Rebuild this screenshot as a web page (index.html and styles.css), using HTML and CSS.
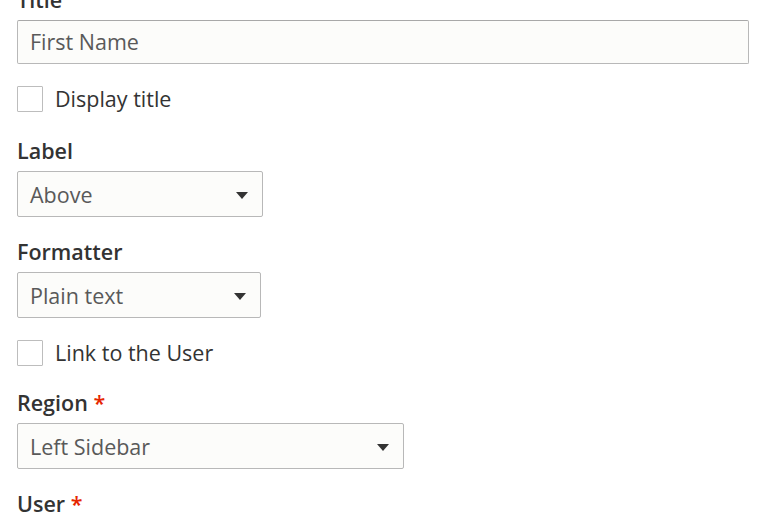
FILE: index.html
```html
<!DOCTYPE html>
<html>
<head>
<meta charset="utf-8">
<link rel="stylesheet" href="styles.css">
</head>
<body>
<form class="form">
  <div class="item">
    <label class="lbl">Title</label>
    <div class="text-input">First Name</div>
  </div>
  <div class="item check-item first-check">
    <span class="box"></span>
    <span class="check-text">Display title</span>
  </div>
  <div class="item">
    <label class="lbl">Label</label>
    <div class="select w-label"><span>Above</span><span class="arrow"></span></div>
  </div>
  <div class="item">
    <label class="lbl">Formatter</label>
    <div class="select w-format"><span>Plain text</span><span class="arrow"></span></div>
  </div>
  <div class="item check-item">
    <span class="box"></span>
    <span class="check-text">Link to the User</span>
  </div>
  <div class="item">
    <label class="lbl">Region <span class="req">*</span></label>
    <div class="select w-region"><span>Left Sidebar</span><span class="arrow"></span></div>
  </div>
  <div class="item">
    <label class="lbl">User <span class="req">*</span></label>
  </div>
</form>
</body>
</html>
```

FILE: styles.css
```css
html, body {
  margin: 0;
  padding: 0;
  background: #ffffff;
}
body {
  font-family: "Open Sans", "Noto Sans", sans-serif;
  font-size: 21.5px;
  color: #333333;
  width: 768px;
  height: 512px;
  overflow: hidden;
}
.form {
  display: flex;
  flex-direction: column;
  padding-left: 17px;
  margin-top: -13px;
}
.item {
  display: flex;
  flex-direction: column;
  align-items: flex-start;
  margin-bottom: 22px;
}
.lbl {
  display: block;
  font-weight: 600;
  line-height: 26px;
  height: 26px;
  margin-bottom: 7px;
  color: #333333;
}
.req {
  color: #e62600;
}
.text-input {
  box-sizing: border-box;
  width: 732px;
  height: 44px;
  border: 1px solid #b8b8b8;
  border-top-color: #a8a8a8;
  border-radius: 2px;
  background: #fcfcfa;
  color: #595959;
  padding: 0 12px;
  line-height: 42px;
}
.check-item {
  flex-direction: row;
  align-items: center;
  gap: 12px;
  margin-bottom: 24px;
}
.first-check {
  margin-bottom: 26px;
}
.box {
  box-sizing: border-box;
  width: 26px;
  height: 26px;
  border: 1px solid #bdbdbd;
  border-radius: 1px;
  background: #fff;
}
.check-text {
  line-height: 26px;
}
.select {
  box-sizing: border-box;
  height: 46px;
  border: 1px solid #b8b8b8;
  border-radius: 2px;
  background: #fcfcfa;
  color: #595959;
  padding: 0 14px 0 12px;
  display: flex;
  align-items: center;
  justify-content: space-between;
}
.w-label { width: 246px; }
.w-format { width: 244px; }
.w-region { width: 387px; }
.arrow {
  width: 0;
  height: 0;
  border-left: 6px solid transparent;
  border-right: 6px solid transparent;
  border-top: 7px solid #333333;
  margin-top: 2px;
}
```
